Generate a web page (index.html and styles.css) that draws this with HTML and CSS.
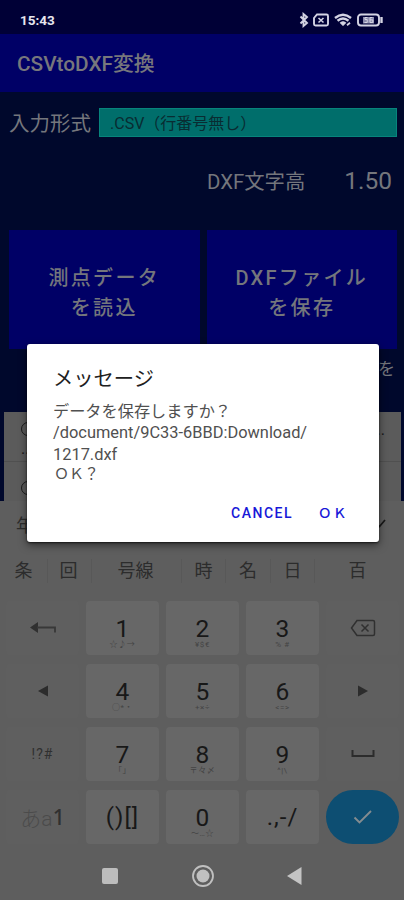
FILE: index.html
```html
<!DOCTYPE html>
<html lang="ja">
<head>
<meta charset="utf-8">
<title>CSVtoDXF変換</title>
<link rel="stylesheet" href="styles.css">
</head>
<body>
<div class="phone">
  <header class="status">
    <span class="clock">15:43</span>
    <svg class="status-icons" width="88" height="16" viewBox="0 0 88 16" fill="none" stroke="#d3d3e3" stroke-width="1.6">
      <path stroke-width="1.900" d="M2.500 4.500l6.500 6.500-3.500 3V2L9 5l-6.500 6.500"/>
      <path stroke-width="1.900" d="M19 2.500h9.500q1.500 0 1.500 1.500v8q0 1.500-1.500 1.500h-11q-1.500 0-1.500-1.500V6z"/>
      <path d="M20.500 6l5 4.500M25.500 6l-5 4.500"/>
      <path d="M37 6q8-6.500 16 0M39.500 8.700q5.500-4.500 11 0" stroke-width="2.400"/>
      <path d="M42 10.800q3-2.600 6 0l-3 3z" fill="#d3d3e3" stroke-width=".6"/>
      <path d="M49 13.200l3-2.500" stroke-width="1.800"/>
      <rect x="60" y="2.500" width="21" height="11" rx="3" stroke-width="1.900"/>
      <path d="M83.500 5v6" stroke-width="2.400"/>
      <rect x="65" y="5" width="11" height="6.500" fill="#8c8cae" stroke="none"/>
      <path d="M69.500 5.500H67v2h2.200v3h-2.800M74.500 5.500H72v5h2.800v-2.600H72" stroke-width="1"/>
    </svg>
  </header>
  <div class="appbar">CSVtoDXF変換</div>
  <main class="content">
    <div class="format-row">
      <span class="format-label">入力形式</span>
      <div class="format-field">.CSV（行番号無し）</div>
    </div>
    <div class="height-row">
      <span class="height-label">DXF文字高</span>
      <span class="height-value">1.50</span>
    </div>
    <div class="actions">
      <div class="action">測点データ<br>を読込</div>
      <div class="action">DXFファイル<br>を保存</div>
    </div>
    <div class="hint">を</div>
    <div class="list">
      <div class="item"><span class="radio"></span><span class="more">..</span><span class="dots">..</span></div>
      <div class="item"><span class="radio"></span></div>
    </div>
  </main>
  <section class="keyboard">
    <div class="suggest first"><span>年</span><svg width="12" height="12" viewBox="0 0 12 12" fill="none" stroke="#181818" stroke-width="1.700"><path d="M1 5l3.500 3.500L10 2"/></svg></div>
    <div class="suggest second">
      <span>条</span><span>回</span><span>号線</span><span>時</span><span>名</span><span>日</span><span>百</span>
    </div>
    <div class="keys">
      <div class="key side"><svg width="28" height="18" viewBox="0 0 28 18"><path d="M1 8.500l8-5.500v11z" fill="#303030"/><path d="M8 8.500h18v5" fill="none" stroke="#383838" stroke-width="1.800"/></svg></div>
      <div class="key"><b>1</b><small>☆♪→</small></div>
      <div class="key"><b>2</b><small>¥$€</small></div>
      <div class="key"><b>3</b><small>% #</small></div>
      <div class="key side"><svg width="26" height="20" viewBox="0 0 26 20" fill="none" stroke="#303030" stroke-width="1.500"><path d="M1.500 10L7 2.500h16q1.500 0 1.500 1.500v12q0 1.500-1.500 1.500H7zM11.500 6.500l7 7M18.500 6.500l-7 7"/></svg></div>

      <div class="key side"><svg width="12" height="12" viewBox="0 0 12 12"><path d="M1 6l10-5.500v11z" fill="#2c2c2c"/></svg></div>
      <div class="key"><b>4</b><small>○*・</small></div>
      <div class="key"><b>5</b><small>+×÷</small></div>
      <div class="key"><b>6</b><small>&lt;=&gt;</small></div>
      <div class="key side"><svg width="12" height="12" viewBox="0 0 12 12"><path d="M11 6L1 .5v11z" fill="#2c2c2c"/></svg></div>

      <div class="key side sym">!?#</div>
      <div class="key"><b>7</b><small>「」</small></div>
      <div class="key"><b>8</b><small>〒々〆</small></div>
      <div class="key"><b>9</b><small>^|\</small></div>
      <div class="key side"><svg width="24" height="8" viewBox="0 0 24 8" fill="none" stroke="#2c2c2c" stroke-width="2"><path d="M1.500 0v6h21V0"/></svg></div>

      <div class="key side mode"><span>あa</span><strong>1</strong></div>
      <div class="key plain"><b>()[]</b></div>
      <div class="key"><b>0</b><small>〜…☆</small></div>
      <div class="key plain"><b>.,-/</b></div>
      <div class="key enter"><svg width="20" height="16" viewBox="0 0 20 16" fill="none" stroke="#848c90" stroke-width="1.900"><path d="M1.500 8.500l5 5L18 2"/></svg></div>
    </div>
    <nav class="nav">
      <svg width="16" height="16"><rect width="16" height="16" rx="2" fill="#bdbdbd"/></svg>
      <svg width="22" height="22" fill="none" stroke="#c0c0c0"><circle cx="11" cy="11" r="10" stroke-width="1.800"/><circle cx="11" cy="11" r="6.500" fill="#c0c0c0" stroke="none"/></svg>
      <svg width="15" height="18"><path d="M0 9L14.500 0v18z" fill="#c4c4c4"/></svg>
    </nav>
  </section>
  <div class="dialog">
    <div class="title">メッセージ</div>
    <div class="message"><div class="jp">データを保存しますか？</div><div class="path">/document/9C33-6BBD:Download/</div><div class="path">1217.dxf</div><div class="ok">ＯＫ？</div></div>
    <div class="buttons"><span>CANCEL</span><span class="accept">ＯＫ</span></div>
  </div>
</div>
</body>
</html>
```
FILE: styles.css
```css
* { box-sizing: border-box; }
body { margin: 0; font-family: Roboto, "Noto Sans CJK JP", sans-serif; }
.phone { position: relative; width: 404px; height: 900px; overflow: hidden; background: #00082c; }
svg { display: block; }

.status { height: 34px; background: #000036; display: flex; justify-content: space-between; align-items: center; padding: 6px 18px 0 20px; }
.clock { color: #e6e6ee; font-size: 13.5px; font-weight: 700; line-height: 16px; }
.appbar { height: 58px; background: #000066; color: #77777c; font-size: 20.8px; font-weight: 500; line-height: 61px; padding-left: 17px; white-space: nowrap; }

.content { height: 409px; padding-top: 16px; background: #00082c; color: #74767c; }
.format-row { display: flex; height: 29px; padding-right: 7px; }
.format-label { width: 99px; padding-left: 9px; font-size: 20.5px; line-height: 32px; white-space: nowrap; }
.format-field { flex: 1; background: #006e6b; color: #092c32; border: 1px solid #07847c; font-size: 16px; line-height: 29px; padding-left: 10px; white-space: nowrap; }
.height-row { display: flex; justify-content: space-between; height: 93px; padding: 25px 12px 0 207px; line-height: 40px; white-space: nowrap; }
.height-label { font-size: 20.4px; }
.height-value { font-size: 24.5px; line-height: 38px; }
.actions { display: flex; gap: 7px; padding: 0 7px 0 9px; height: 119px; }
.action { flex: 1; background: #000066; text-align: center; font-size: 20px; letter-spacing: 2.3px; line-height: 30px; padding-top: 33px; font-weight: 500; }
.hint { height: 63px; padding: 7px 9px 0 0; text-align: right; font-size: 17px; line-height: 27px; }
.list { margin: 0 3px 0 4px; height: 89px; background: #5b5b5b; }
.item { display: flex; justify-content: space-between; height: 50px; border-bottom: 1px solid #505050; padding: 10px 16px 0 17px; color: #181818; }
.item + .item { border: 0; height: 39px; padding-top: 19px; }
.radio { width: 14px; height: 14px; border: 1.5px solid #1a1a1a; border-radius: 50%; flex: none; }
.more { flex: 1; margin: 17px 0 0 -14px; line-height: 20px; }
.dots { line-height: 16px; }

.keyboard { height: 399px; background: #5e5e5e; }
.suggest { font-size: 18px; color: #2c2c2c; display: flex; align-items: center; }
.first { height: 46px; justify-content: space-between; padding: 0 17px 0 16px; }
.second { height: 46px; display: grid; grid-template-columns: 47px 44px 90px 44px 45px 44px 90px; text-align: center; padding-top: 1px; }
.second span { line-height: 24px; }
.second span + span { border-left: 1px solid #585858; }
.second span:nth-child(2), .second span:nth-child(3) { padding-right: 2px; }
.second span:last-child { padding-right: 4px; }
.keys { display: grid; grid-template-columns: repeat(5, 73px); grid-template-rows: repeat(4, 54px); gap: 9px 7px; padding: 8px 0 0 6px; }
.key { display: flex; flex-direction: column; align-items: center; background: #676767; border-radius: 4px; color: #181818; padding-top: 13px; }
.key b { font-weight: 400; font-size: 24.5px; line-height: 29px; }
.key small { font-size: 8px; line-height: 10px; margin-top: -3px; color: #444; letter-spacing: .6px; }
.side { background: #5f5f5f; justify-content: center; padding: 0; }
.key.sym { font-size: 14px; color: #303030; letter-spacing: 1px; }
.key.mode { flex-direction: row; align-items: center; font-size: 21px; color: #4b4b4b; font-weight: 300; }
.mode strong { color: #303030; font-family: "Noto Sans", sans-serif; font-weight: 500; }
.plain b { font-size: 24px; letter-spacing: 1px; }
.enter { background: #0d4e72; border-radius: 27px; justify-content: center; padding: 0; }
.nav { height: 56px; padding: 7px 102px 0; display: flex; justify-content: space-between; align-items: center; }

.dialog { position: absolute; left: 27px; top: 344px; width: 352px; height: 198px; background: #fff; border-radius: 3px; box-shadow: 0 3px 9px rgba(0,0,0,.5), 0 1px 2px rgba(0,0,0,.6); padding: 19px 26px 0; white-space: nowrap; }
.title { font-size: 20.3px; line-height: 32px; color: #202020; }
.message { height: 95px; margin-top: 6px; font-size: 16.4px; line-height: 21px; color: #505050; }
.jp { font-size: 16.2px; }
.path { line-height: 21.5px; }
.ok { font-size: 15px; line-height: 18px; padding-left: 1px; }
.buttons { display: flex; justify-content: flex-end; font-size: 14px; font-weight: 500; color: #1818d8; letter-spacing: 1.5px; line-height: 34px; gap: 25px; padding-right: 5px; }
.accept { font-size: 13.5px; }
```
